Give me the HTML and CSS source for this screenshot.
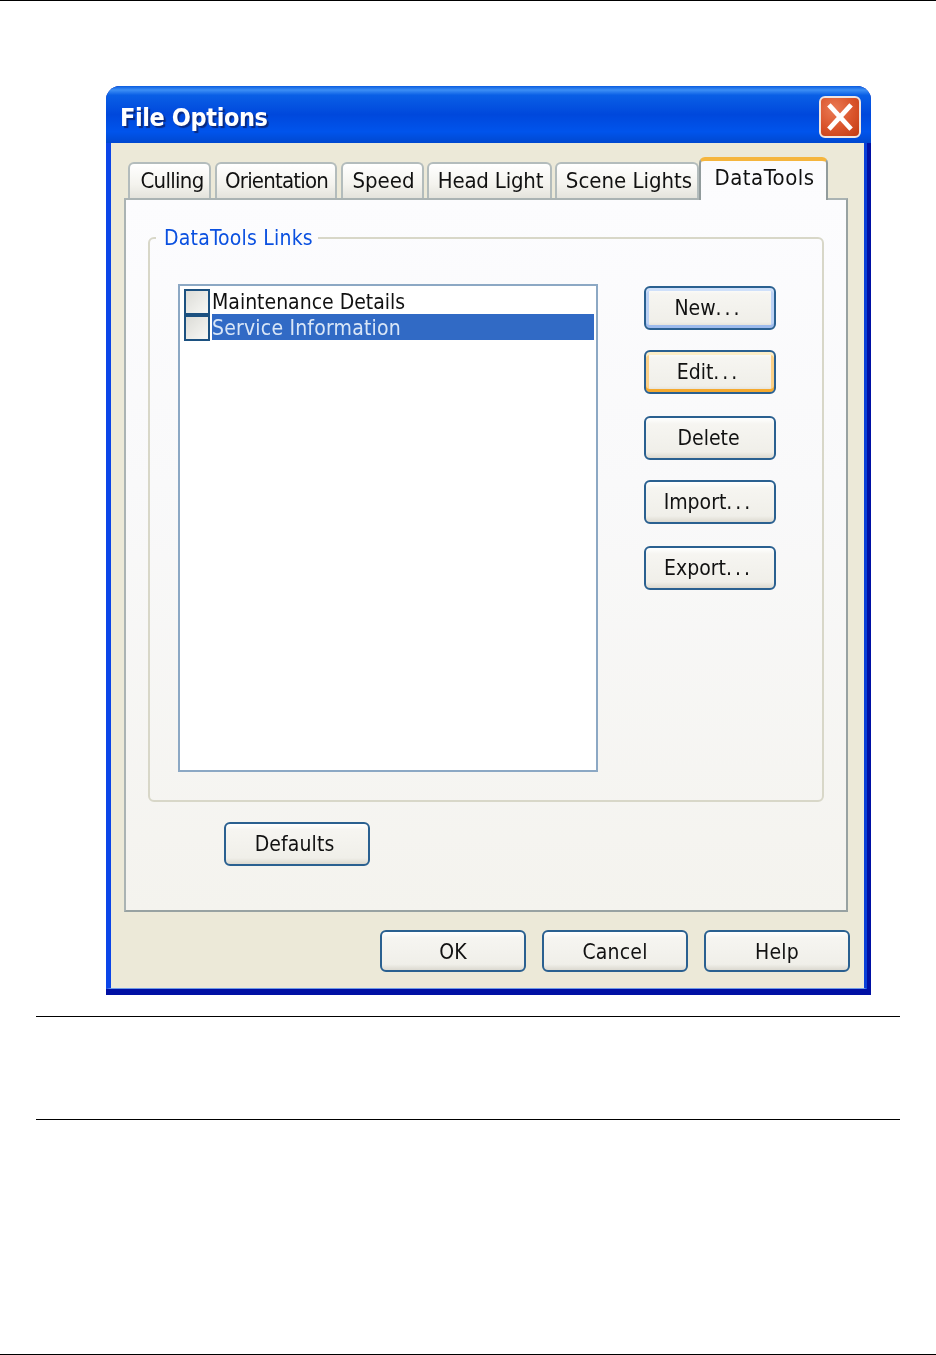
FILE: index.html
```html
<!DOCTYPE html>
<html lang="en">
<head>
<meta charset="utf-8">
<title>File Options</title>
<link rel="stylesheet" href="styles.css">
</head>
<body>
<div class="page">
  <div class="window">
    <div class="titlebar">
      <span class="title">File Options</span>
      <span class="close">
        <svg viewBox="0 0 40 40" width="38" height="38"><path d="M10 9 L30 31 M30 9 L10 31" stroke="#fff" stroke-width="5" stroke-linecap="square" fill="none"/></svg>
      </span>
    </div>
    <div class="client">
      <div class="tabs">
        <span class="tab t1">Culling</span>
        <span class="tab t2">Orientation</span>
        <span class="tab t3">Speed</span>
        <span class="tab t4">Head Light</span>
        <span class="tab t5">Scene Lights</span>
        <span class="tab active">DataTools</span>
      </div>
      <div class="panel">
        <fieldset class="group">
          <legend class="legend">DataTools Links</legend>
          <div class="group-body">
            <div class="list">
              <div class="row"><span class="check"></span><span class="label">Maintenance Details</span></div>
              <div class="row"><span class="check"></span><span class="label selected">Service Information</span></div>
            </div>
            <div class="actions">
              <button class="btn side hot blue">New<span class="dots">...</span></button>
              <button class="btn side hot orange">Edit<span class="dots">...</span></button>
              <button class="btn side">Delete</button>
              <button class="btn side">Import<span class="dots">...</span></button>
              <button class="btn side">Export<span class="dots">...</span></button>
            </div>
          </div>
        </fieldset>
        <button class="btn defaults">Defaults</button>
      </div>
      <div class="footer">
        <button class="btn wide">OK</button>
        <button class="btn wide">Cancel</button>
        <button class="btn wide">Help</button>
      </div>
    </div>
  </div>
  <div class="note"></div>
</div>
</body>
</html>
```
FILE: styles.css
```css
* { box-sizing: border-box; }
html, body { margin: 0; padding: 0; background: #fff; }
body { font-family: "DejaVu Sans", "Noto Sans", sans-serif; font-stretch: condensed; color: #111; }

.page {
  height: 1355px;
  border-top: 1px solid #000;
  border-bottom: 1px solid #000;
  padding-top: 85px;
  overflow: hidden;
}

.window {
  width: 765px;
  height: 909px;
  margin-left: 106px;
  border-radius: 14px 14px 0 0;
  background: #0010a4;
  padding: 0 4px 6px 0;
  filter: blur(0.5px);
}

.titlebar {
  height: 57px;
  margin: 0 -4px 0 0;
  border-radius: 14px 14px 0 0;
  background: linear-gradient(180deg, #0a5ce0 0, #3d8ff5 7%, #0a5fe6 16%, #0048dc 50%, #0054ec 80%, #0048d0 100%);
  display: flex;
  align-items: center;
  justify-content: space-between;
  padding: 4px 10px 0 14px;
}

.title {
  color: #fff;
  font-weight: 700;
  font-size: 25px;
  line-height: 28px;
  margin-top: 3px;
  letter-spacing: -0.4px;
  text-shadow: 2px 2px 1px #0a2a80;
}

.close {
  width: 42px;
  height: 42px;
  border: 2px solid #f0e4e0;
  border-radius: 6px;
  background: radial-gradient(circle at 35% 30%, #ea7a55 0, #d9532a 55%, #c23a12 100%);
  display: flex;
  align-items: center;
  justify-content: center;
}

.client {
  height: 846px;
  background: #ece9d8;
  padding: 14px 0 0 13px;
  border-left: 5px solid #0b45e8;
  border-right: 3px solid #0a3fd8;
  border-bottom: 1px solid #6f9be8;
}

.tabs {
  display: flex;
  align-items: flex-end;
  height: 43px;
  padding-left: 4px;
  position: relative;
  z-index: 1;
  margin-bottom: -2px;
}

.tab {
  height: 36px;
  margin-bottom: 2px;
  border: 2px solid #b3bcbc;
  border-bottom: 0;
  border-radius: 6px 6px 0 0;
  background: linear-gradient(180deg, #fff 0, #f4f3ee 60%, #e4e3dc 100%);
  font-size: 22px;
  line-height: 33px;
  text-align: center;
  white-space: nowrap;
}
.t1 { width: 83px; margin-right: 4px; letter-spacing: -0.7px; padding-left: 5px; }
.t2 { width: 122px; margin-right: 4px; letter-spacing: -0.8px; padding-left: 1px; }
.t3 { width: 83px; margin-right: 3px; padding-left: 2px; }
.t4 { width: 125px; margin-right: 3px; letter-spacing: -0.2px; padding-left: 2px; }
.t5 { width: 144px; padding-left: 4px; }

.tab.active {
  width: 129px;
  height: 43px;
  margin-bottom: 0;
  padding-left: 2px;
  background: linear-gradient(180deg, #fbfbfd, #fcfcfe);
  border: 2px solid #919b9c;
  border-top: 4px solid #f5b53d;
  border-bottom: 0;
  line-height: 33px;
  letter-spacing: 0.5px;
}

.panel {
  width: 724px;
  height: 714px;
  border: 2px solid #aab3b3;
  border-right-color: #98a2a2;
  border-bottom-color: #98a2a2;
  background: linear-gradient(180deg, #fcfcfe 0, #f9f9fa 40%, #f4f3ee 100%);
  padding: 24px 0 0 22px;
}

.group {
  margin: 0;
  width: 676px;
  height: 578px;
  border: 2px solid #d8d7c8;
  border-radius: 6px;
  padding: 0;
  min-width: 0;
}

.legend {
  margin-left: 6px;
  padding: 0 5px 0 8px;
  color: #0a50e0;
  font-size: 21px;
  line-height: 28px;
  letter-spacing: 0.2px;
}

.group-body {
  display: flex;
  align-items: flex-start;
  padding: 32px 0 0 28px;
}

.list {
  width: 420px;
  height: 488px;
  background: #fff;
  border: 2px solid #8ca8c4;
  padding: 3px 2px 0 4px;
}

.row {
  height: 26px;
  display: flex;
  align-items: flex-start;
}

.check {
  flex: none;
  width: 26px;
  height: 26px;
  margin-right: 2px;
  border: 2px solid #1c5180;
  background: linear-gradient(135deg, #dcdcd7 0, #f8f8f5 100%);
}

.label {
  flex: 1;
  height: 26px;
  font-size: 21px;
  line-height: 27px;
  white-space: nowrap;
}
.label.selected {
  margin-top: -1px;
  line-height: 29px;
  letter-spacing: 0.2px;
  background: #316ac5;
  color: #d9e6f7;
}

.actions {
  margin-left: 46px;
  margin-top: 2px;
  display: grid;
  grid-template-rows: 64px 66px 64px 66px 44px;
}

.btn {
  width: 132px;
  height: 44px;
  padding: 0;
  border: 2px solid #2a6090;
  border-radius: 6px;
  background: linear-gradient(180deg, #fff 0, #f6f5f1 15%, #f0efe9 85%, #dcd9d0 100%);
  font-family: inherit;
  font-stretch: condensed;
  font-size: 21px;
  line-height: 38px;
  color: #111;
}
.dots { letter-spacing: 3px; }
.btn.side { padding-right: 3px; }
.btn.hot {
  box-shadow: inset 0 3px 0 #cfe0fa, inset 0 -3px 0 #9dbbed, inset 3px 0 0 #bcd2f5, inset -3px 0 0 #bcd2f5;
}
.btn.orange {
  box-shadow: inset 0 3px 0 #fdeec8, inset 0 -3px 0 #f5a92e, inset 3px 0 0 #fbd088, inset -3px 0 0 #fbd088;
}

.defaults {
  display: block;
  width: 146px;
  margin: 20px 0 0 76px;
  padding-right: 5px;
  letter-spacing: 0.1px;
}

.footer {
  display: flex;
  gap: 16px;
  justify-content: flex-end;
  margin: 18px 14px 0 0;
}
.btn.wide { width: 146px; height: 42px; line-height: 40px; letter-spacing: 0.2px; }

.note {
  height: 104px;
  margin: 21px 36px 0;
  border-top: 1px solid #000;
  border-bottom: 1px solid #000;
}
```
